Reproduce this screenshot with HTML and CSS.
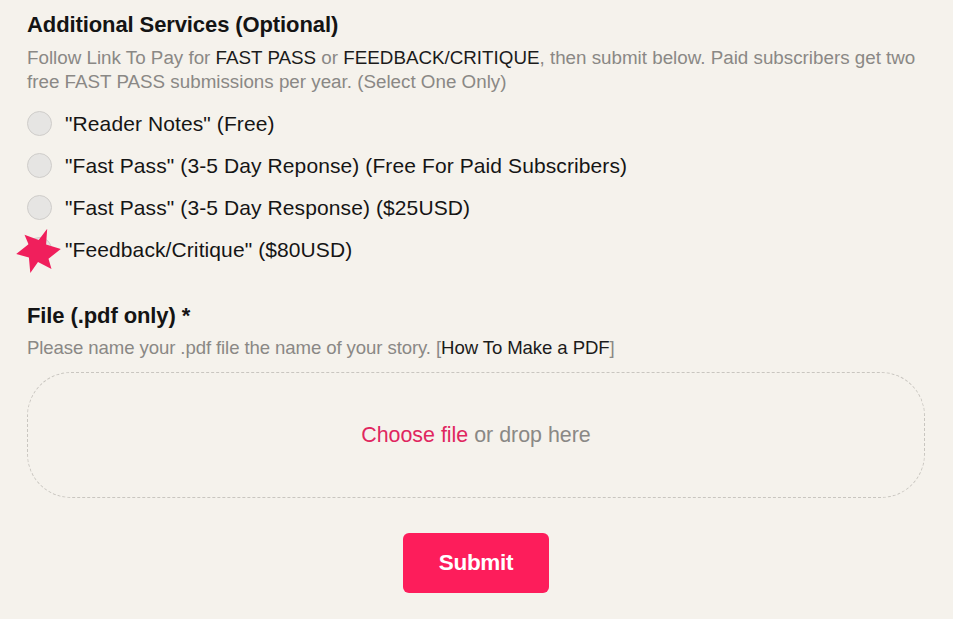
FILE: index.html
```html
<!DOCTYPE html>
<html lang="en">
<head>
<meta charset="utf-8">
<title>Submission form</title>
<link rel="stylesheet" href="styles.css">
</head>
<body>
<form class="form">
  <section class="field">
    <h2 class="field-title">Additional Services (Optional)</h2>
    <p class="field-desc">Follow Link To Pay for <span class="dark">FAST PASS</span> or <span class="dark">FEEDBACK/CRITIQUE</span>, then submit below. Paid subscribers get two free FAST PASS submissions per year. (Select One Only)</p>
    <div class="options">
      <label class="option"><span class="radio"></span><span class="option-text">"Reader Notes" (Free)</span></label>
      <label class="option"><span class="radio"></span><span class="option-text">"Fast Pass" (3-5 Day Reponse) (Free For Paid Subscribers)</span></label>
      <label class="option"><span class="radio"></span><span class="option-text">"Fast Pass" (3-5 Day Response) ($25USD)</span></label>
      <label class="option"><span class="radio radio-star"><svg class="star" width="50" height="50" viewBox="0 0 50 50"><polygon fill="#f01f5c" points="33.2,2.8 32.1,18.6 46.8,22.9 34.5,32.8 37.5,43.0 24.0,36.0 16.3,47.1 14.9,31.4 2.2,28.0 14.5,18.2 10.5,8.7 24.7,13.9"/></svg></span><span class="option-text">"Feedback/Critique" ($80USD)</span></label>
    </div>
  </section>
  <section class="field file-field">
    <h2 class="field-title">File (.pdf only) *</h2>
    <p class="field-desc field-desc-file">Please name your .pdf file the name of your story. [<span class="dark">How To Make a PDF</span>]</p>
    <div class="dropzone"><span class="choose">Choose file</span>&nbsp;or drop here</div>
  </section>
  <div class="actions"><button type="button" class="submit">Submit</button></div>
</form>
</body>
</html>
```
FILE: styles.css
```css
html, body {
  margin: 0;
  padding: 0;
  background: #f5f2ec;
}
body {
  font-family: "Liberation Sans", Arial, sans-serif;
  color: #161616;
}
.form {
  padding: 11px 28px 0 27px;
}
.field-title {
  margin: 0;
  font-size: 22px;
  line-height: 28px;
  font-weight: 700;
  letter-spacing: -0.1px;
  color: #141414;
}
.field-desc {
  margin: 7px 0 0;
  font-size: 18.8px;
  line-height: 24px;
  color: #8a8885;
}
.dark {
  color: #1b1b1b;
}
.options {
  display: flex;
  flex-direction: column;
  gap: 17px;
  margin-top: 17px;
}
.option {
  display: flex;
  align-items: center;
  height: 25px;
}
.radio {
  position: relative;
  width: 23px;
  height: 23px;
  border-radius: 50%;
  background: #e6e5e3;
  border: 1px solid #cfcdca;
  flex: none;
  margin-right: 13px;
}
.star {
  position: absolute;
  left: -14px;
  top: -12px;
}
.option-text {
  font-size: 21px;
  letter-spacing: 0.1px;
  color: #151515;
}
.file-field {
  margin-top: 40px;
}
.file-field .field-desc-file {
  margin-top: 6px;
  font-size: 18.6px;
  letter-spacing: -0.1px;
}
.dropzone {
  margin-top: 12px;
  height: 124px;
  border: 1px dashed #c9c6c0;
  border-radius: 44px;
  display: flex;
  align-items: center;
  justify-content: center;
  font-size: 21.4px;
  color: #8a8885;
}
.choose {
  color: #e0265f;
}
.actions {
  display: flex;
  justify-content: center;
  margin-top: 35px;
}
.submit {
  width: 146px;
  height: 60px;
  border: none;
  border-radius: 6px;
  background: #fd1d5b;
  color: #fff;
  font-family: "Liberation Sans", Arial, sans-serif;
  font-size: 22.5px;
  font-weight: 700;
  letter-spacing: -0.3px;
  padding: 0;
}
```
